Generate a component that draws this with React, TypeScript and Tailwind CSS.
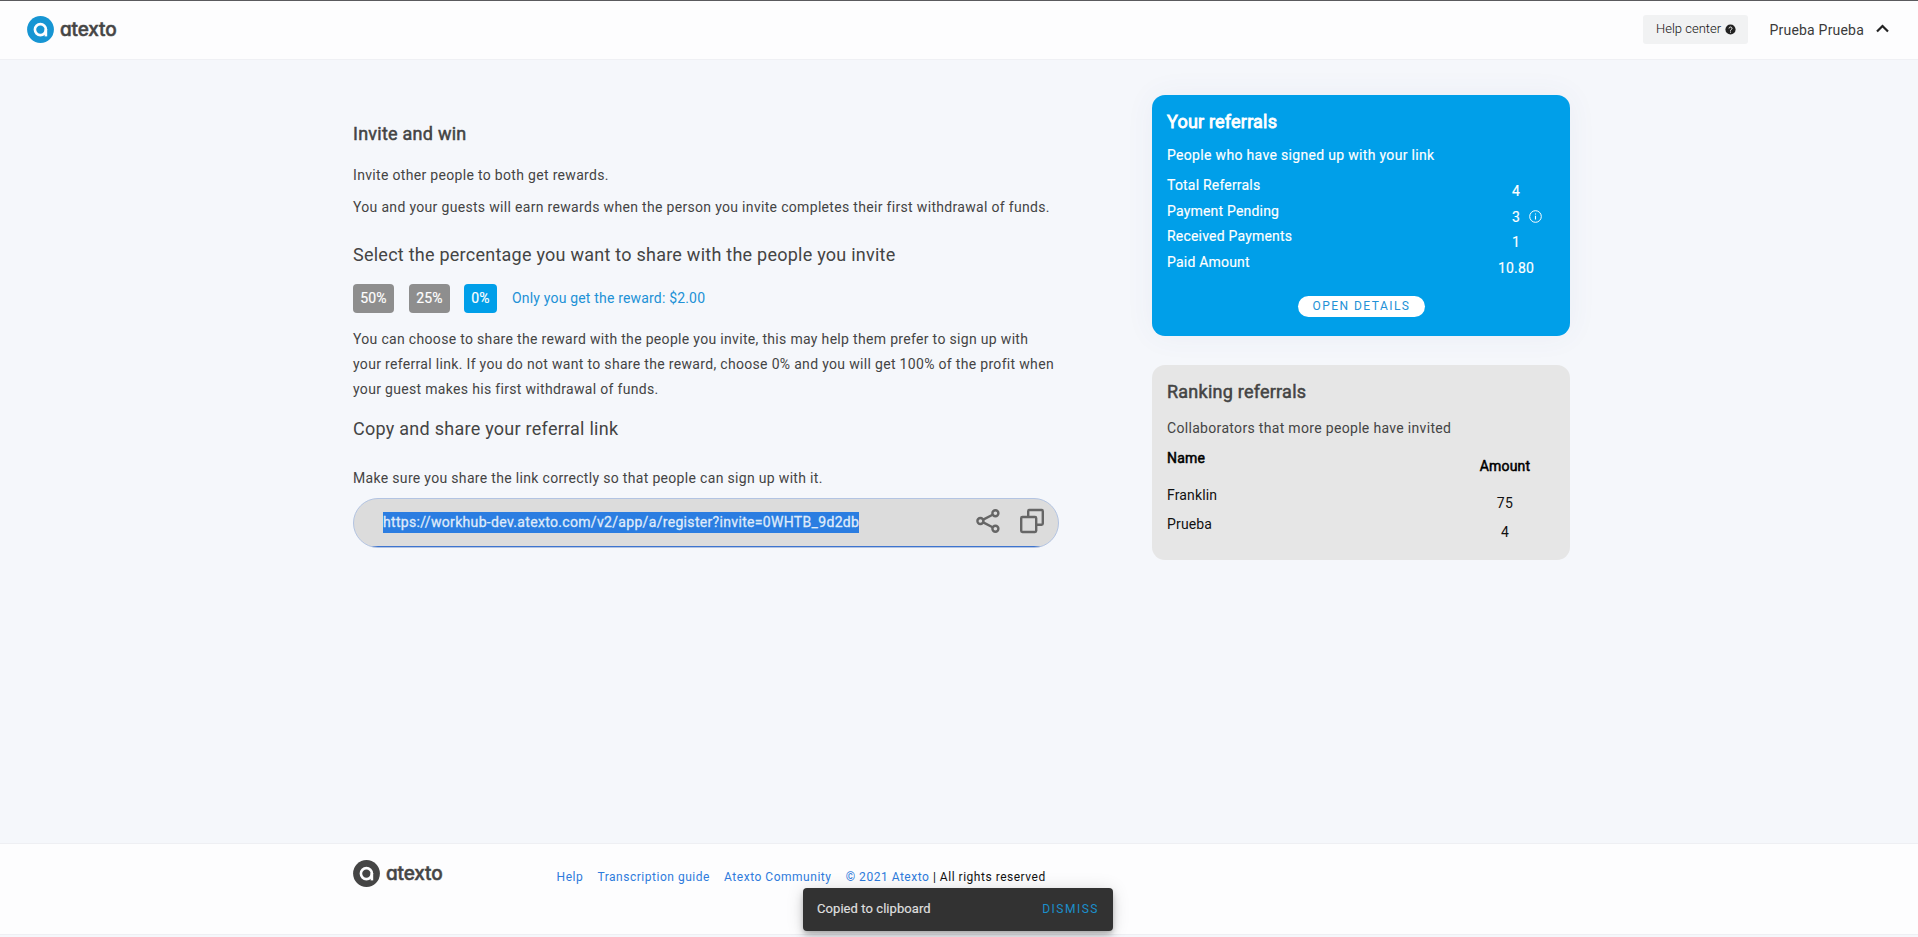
import React from "react";

function Logo({ color, ink }: { color: string; ink: string }) {
  return (
    <div className="flex items-center gap-[6px]">
      <svg width="27" height="27" viewBox="0 0 27 27" fill="none">
        <circle cx="13.5" cy="13.5" r="13.4" fill={color} />
        <circle cx="13.4" cy="13.6" r="5.5" stroke="#fdfdfe" strokeWidth="2.6" />
        <path d="M18.9 13v7.4" stroke="#fdfdfe" strokeWidth="2.6" />
      </svg>
      <span
        className="-mt-px font-[Inter,sans-serif] text-[19px] leading-[27px] font-medium tracking-[-0.15px] [font-feature-settings:'cv11'] [-webkit-text-stroke:0.5px]"
        style={{ color: ink }}
      >
        atexto
      </span>
    </div>
  );
}

function ShareIcon() {
  return (
    <svg width="24" height="26" viewBox="0 0 24 26" fill="none" stroke="#666" strokeWidth="2.4">
      <circle cx="4.4" cy="13" r="3" />
      <circle cx="19.4" cy="5.3" r="3" />
      <circle cx="19.4" cy="20.8" r="3" />
      <path d="M7.2 11.6 16.6 6.8M7.2 14.4l9.4 4.9" />
    </svg>
  );
}

function CopyIcon() {
  return (
    <svg width="24" height="26" viewBox="0 0 24 26" fill="none" stroke="#666" strokeWidth="2.4">
      <rect x="1.2" y="9" width="15" height="15" rx="1.2" />
      <path d="M8.2 9V3.2A1.2 1.2 0 0 1 9.4 2h12.2a1.2 1.2 0 0 1 1.2 1.2v12.4a1.2 1.2 0 0 1-1.2 1.2h-5.4" />
    </svg>
  );
}

function InfoIcon() {
  return (
    <svg width="13" height="13" viewBox="0 0 13 13" fill="none" stroke="#fff">
      <circle cx="6.5" cy="6.5" r="5.8" strokeWidth="1" />
      <path d="M6.5 5.7v3.8M6.5 3.4v1.1" strokeWidth="1.1" />
    </svg>
  );
}

const stats = [
  { label: "Total Referrals", value: "4", info: false },
  { label: "Payment Pending", value: "3", info: true },
  { label: "Received Payments", value: "1", info: false },
  { label: "Paid Amount", value: "10.80", info: false },
];

const ranking = [
  { name: "Franklin", amount: "75" },
  { name: "Prueba", amount: "4" },
];

export default function App() {
  return (
    <div className="flex h-[937px] flex-col bg-[#f5f7fb] font-[Roboto,sans-serif] text-sm text-[#444]">
      <header className="flex h-[60px] shrink-0 items-center justify-between border-t border-b border-t-[#5a5a5e] border-b-[#eff0f4] bg-[#fdfdfe] pr-[29px] pb-px pl-[27px]">
        <Logo color="#1695d3" ink="#454545" />
        <div className="flex items-center">
          <button className="flex h-[29px] w-[105px] items-center justify-center gap-1 rounded-[3px] bg-[#f1f2f3] pl-[2px] text-[13px] font-light text-[#111]">
            Help center
            <svg width="11" height="11" viewBox="0 0 11 11" fill="none">
              <circle cx="5.5" cy="5.5" r="5.1" fill="#212121" />
              <path d="M4 4.4a1.5 1.4 0 1 1 2.3 1.2c-.6.3-.8.5-.8 1.1M5.5 7.6v1" stroke="#fff" strokeWidth="1" />
            </svg>
          </button>
          <span className="ml-[22px] text-[14px] tracking-[0.2px] text-[#3a3a3a]">Prueba Prueba</span>
          <svg className="mb-[3px] ml-[12px]" width="13" height="9" viewBox="0 0 13 9" fill="none">
            <path d="M1 7.5 6.5 2 12 7.5" stroke="#222" strokeWidth="2.2" />
          </svg>
        </div>
      </header>

      <main className="flex h-[783px] shrink-0 pl-[353px]">
        <section className="w-[706px] pt-[62px] tracking-[0.32px]">
          <h1 className="text-[18px] leading-6 tracking-[0.25px] [-webkit-text-stroke:0.5px]">Invite and win</h1>
          <p className="mt-[17px] leading-[25px]">Invite other people to both get rewards.</p>
          <p className="mt-[7px] leading-[25px] whitespace-nowrap">
            You and your guests will earn rewards when the person you invite completes their first withdrawal of funds.
          </p>
          <h2 className="mt-[23px] text-[18px] leading-6 tracking-[0.245px]">
            Select the percentage you want to share with the people you invite
          </h2>
          <div className="mt-[17px] flex h-[29px] items-center">
            <button className="h-[29px] w-[41px] rounded-[4px] bg-[#8e8e8e] pb-px tracking-[0.1px] text-white [-webkit-text-stroke:0.15px]">50%</button>
            <button className="ml-[15px] h-[29px] w-[41px] rounded-[4px] bg-[#8e8e8e] pb-px tracking-[0.1px] text-white [-webkit-text-stroke:0.15px]">25%</button>
            <button className="ml-[14px] h-[29px] w-[33px] rounded-[4px] bg-[#009fe9] pb-px tracking-[0.1px] text-white [-webkit-text-stroke:0.15px]">0%</button>
            <span className="ml-[15px] pb-px tracking-[0.18px] text-[#2191d6]">Only you get the reward: $2.00</span>
          </div>
          <p className="mt-[14px] leading-[25px] whitespace-nowrap">
            You can choose to share the reward with the people you invite, this may help them prefer to sign up with
            <br />
            your referral link. If you do not want to share the reward, choose 0% and you will get 100% of the profit when
            <br />
            your guest makes his first withdrawal of funds.
          </p>
          <h2 className="mt-[15px] text-[18px] leading-6 tracking-[0.26px]">Copy and share your referral link</h2>
          <p className="mt-[25px] leading-[25px]">Make sure you share the link correctly so that people can sign up with it.</p>
          <div className="mt-[7px] h-[50px] overflow-hidden rounded-full border border-[#b3c4e2] bg-[#dcdcdc]">
            <div className="flex h-full items-center border-b border-[#3d74cf] pr-[14px] pl-[29px]">
              <span className="bg-[#2b7de1] leading-[21px] tracking-[0.323px] text-[#dfeafa] [-webkit-text-stroke:0.3px]">
                https://workhub-dev.atexto.com/v2/app/a/register?invite=0WHTB_9d2db
              </span>
              <div className="mb-[3px] ml-auto flex gap-[20px]">
                <ShareIcon />
                <CopyIcon />
              </div>
            </div>
          </div>
        </section>

        <aside className="ml-[93px] w-[418px] pt-[35px]">
          <section className="flex h-[241px] flex-col rounded-[13px] bg-[#009fe9] px-[15px] pt-[15px] text-white shadow-[0_0_30px_rgba(60,80,160,0.06)]">
            <h2 className="text-[18px] leading-6 tracking-[0.2px] [-webkit-text-stroke:0.8px]">Your referrals</h2>
            <p className="mt-[9px] leading-[25px] tracking-[0.32px] [-webkit-text-stroke:0.15px]">People who have signed up with your link</p>
            <dl className="mt-[5px] tracking-[0.2px] [-webkit-text-stroke:0.15px]">
              {stats.map((s) => (
                <div key={s.label} className="flex h-[25.6px] justify-between">
                  <dt className="leading-[25px]">{s.label}</dt>
                  <dd className="mr-[2px] flex w-[74px] items-center pt-[11.5px] leading-[25px]">
                    <span className="w-[74px] text-center">{s.value}</span>
                    {s.info && (
                      <span className="-mr-[6px] -ml-[24px] pb-px">
                        <InfoIcon />
                      </span>
                    )}
                  </dd>
                </div>
              ))}
            </dl>
            <button className="mt-[20.4px] ml-[131px] h-[21px] w-[127px] rounded-full bg-white pb-px text-[12px] leading-5 tracking-[1.45px] text-[#2191d6]">
              OPEN DETAILS
            </button>
          </section>

          <section className="mt-[29px] h-[195px] rounded-[13px] bg-[#e6e6e6] px-[15px] pt-[15px]">
            <h2 className="text-[18px] leading-6 tracking-[0.24px] [-webkit-text-stroke:0.5px]">Ranking referrals</h2>
            <p className="mt-[12px] leading-[25px] tracking-[0.32px]">Collaborators that more people have invited</p>
            <div className="mt-[5px] flex h-[37px] justify-between text-black [-webkit-text-stroke:0.5px]">
              <span className="leading-[25px] tracking-[0.2px]">Name</span>
              <span className="w-[100px] pt-[8px] text-center leading-[25px] tracking-[0.2px]">Amount</span>
            </div>
            {ranking.map((r) => (
              <div key={r.name} className="flex h-[28.5px] justify-between text-[#111]">
                <span className="leading-[25px] tracking-[0.15px]">{r.name}</span>
                <span className="w-[100px] pt-[8px] text-center leading-[25px] tracking-[0.3px]">{r.amount}</span>
              </div>
            ))}
          </section>
        </aside>
      </main>

      <footer className="flex h-[92px] shrink-0 items-start border-t border-b border-[#eeeff3] bg-[#fdfdfe] pt-[16px] pl-[353px]">
        <Logo color="#454545" ink="#454545" />
        <nav className="mt-[5px] ml-[114px] flex gap-[14.2px] text-[12px] leading-[25px] tracking-[0.52px] text-[#2e7bdc]">
          <a>Help</a>
          <a>Transcription guide</a>
          <a>Atexto Community</a>
          <span className="text-[#111]">
            <a className="text-[#2e7bdc]">© 2021 Atexto</a> | All rights reserved
          </span>
        </nav>
      </footer>

      <div className="absolute top-[888px] left-[803px] flex h-[43px] w-[310px] items-center justify-between rounded-[4px] bg-[#323232] pr-[14px] pl-[14px] text-[13px] shadow-[0_3px_5px_-1px_rgba(0,0,0,.2),0_6px_10px_0_rgba(0,0,0,.14),0_1px_18px_0_rgba(0,0,0,.12)]">
        <span className="tracking-[0.07px] text-[#dedede] [-webkit-text-stroke:0.2px]">Copied to clipboard</span>
        <button className="text-[12px] tracking-[1.5px] text-[#1b8fcb]">DISMISS</button>
      </div>
    </div>
  );
}
